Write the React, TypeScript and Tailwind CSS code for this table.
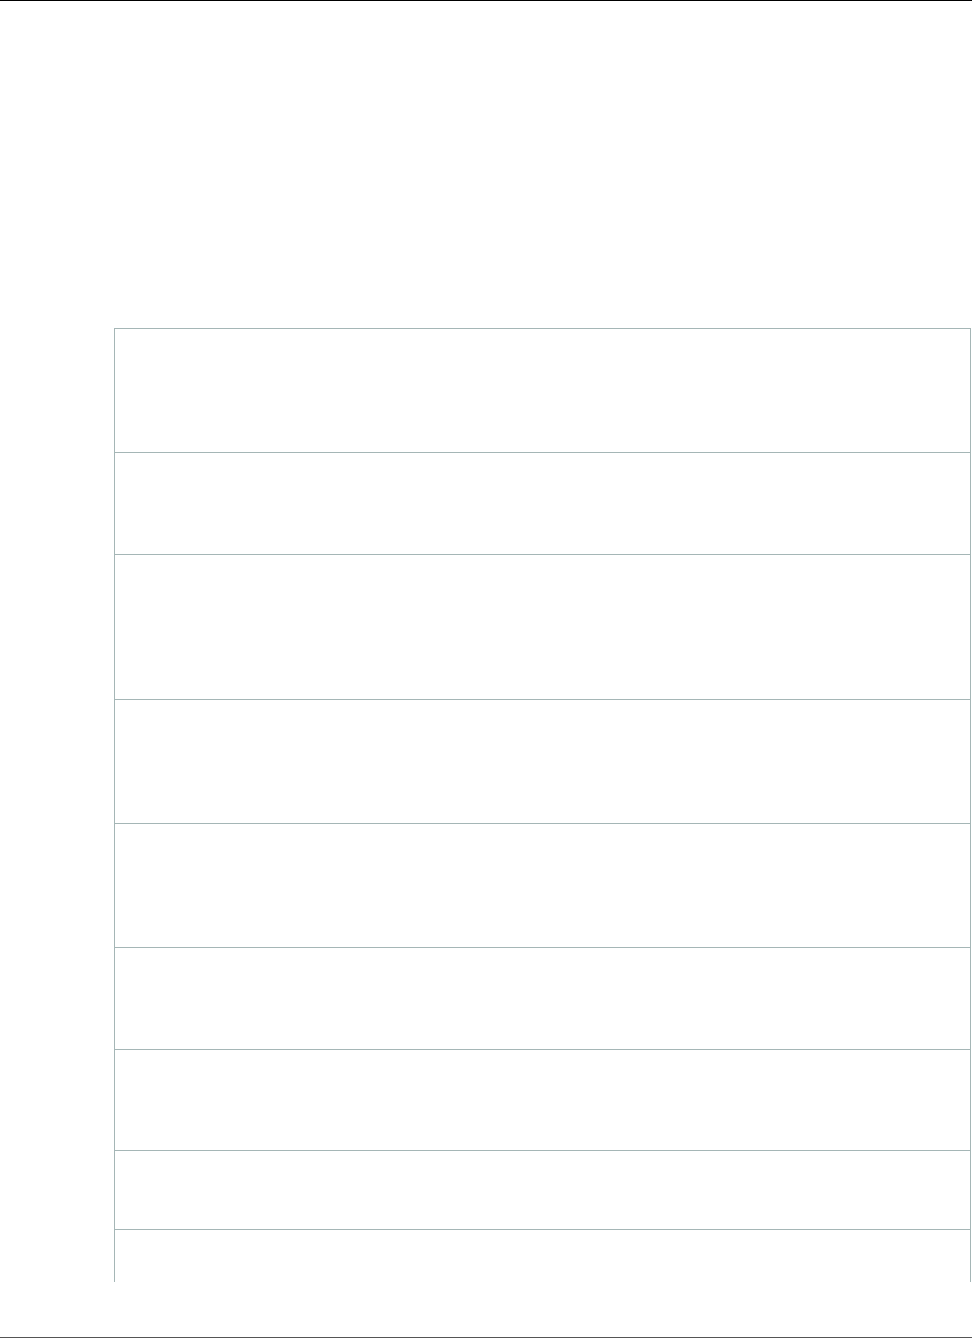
export default function App() {
  const rows = [124, 102, 145, 124, 124, 102, 101, 79];
  return (
    <div className="w-[972px] h-[1339px] bg-white flex flex-col font-['Liberation_Sans',sans-serif]">
      <div className="h-px w-full bg-black shrink-0" />
      <div className="h-[327px] shrink-0" />
      <div className="ml-[114px] w-[857px] border-t border-l border-r border-[#a5b6b6] flex flex-col shrink-0">
        {rows.map((h, i) => (
          <div key={i} className="border-b border-[#a5b6b6] box-border" style={{ height: h }} />
        ))}
        <div className="h-[52px]" />
      </div>
      <div className="h-[55px] shrink-0" />
      <div className="h-px w-full bg-[#555555] shrink-0" />
    </div>
  );
}
